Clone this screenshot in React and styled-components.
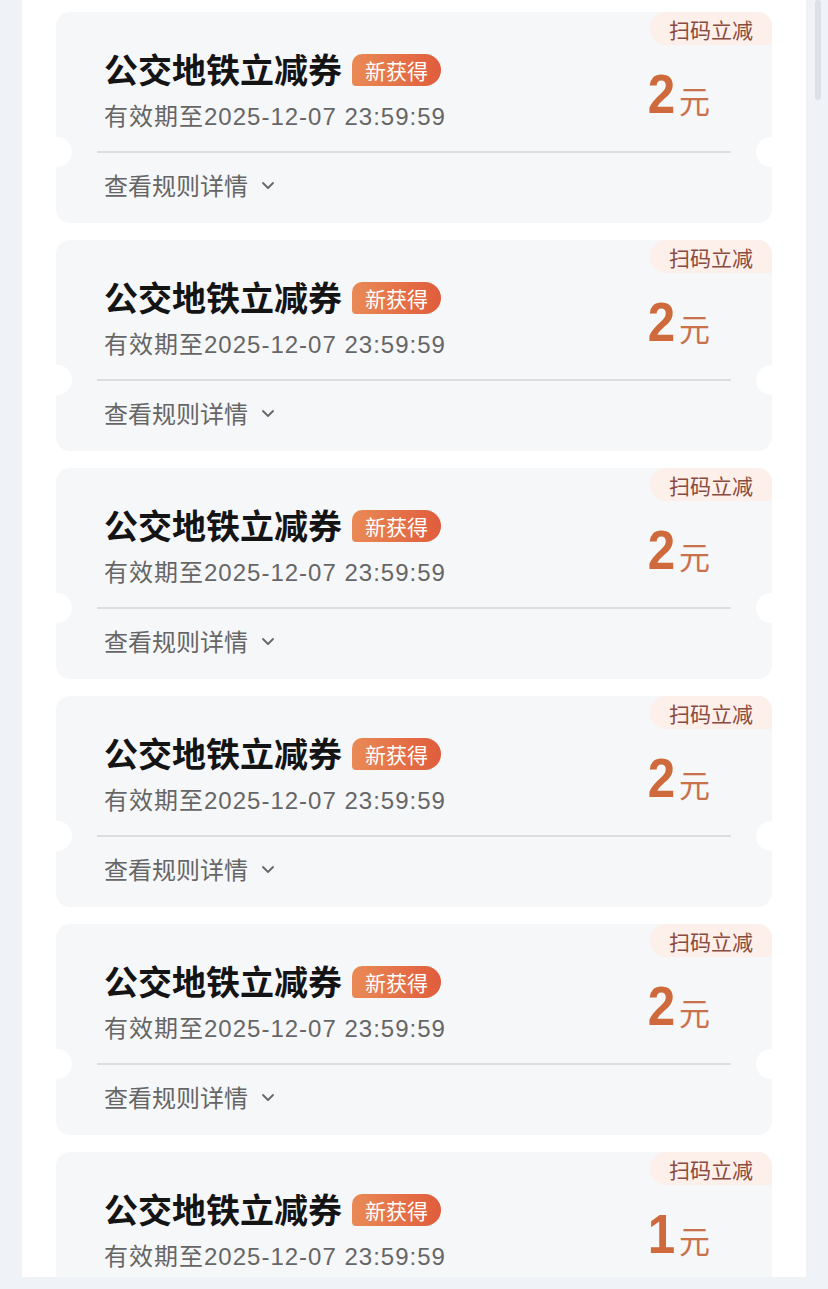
import React from "react";
import styled, { createGlobalStyle } from "styled-components";

const GlobalStyle = createGlobalStyle`
  html, body {
    margin: 0;
    padding: 0;
    background: #eff2f7;
  }
  body {
    font-family: "Liberation Sans", "Noto Sans CJK SC", sans-serif;
  }
`;

const Page = styled.div`
  display: flex;
  width: 828px;
  height: 1289px;
  background: #eff2f7;
  overflow: hidden;
`;

const Panel = styled.div`
  width: 784px;
  height: 1277px;
  margin-left: 22px;
  background: #ffffff;
  overflow: hidden;
  display: flex;
  flex-direction: column;
  gap: 17px;
  padding: 12px 34px 0;
  box-sizing: border-box;
`;

const Gutter = styled.div`
  flex: 1;
  display: flex;
  justify-content: center;
  padding-left: 2px;
`;

const Thumb = styled.div`
  width: 6px;
  height: 100px;
  border-radius: 3px;
  background: #dde1e7;
`;

const Card = styled.div`
  position: relative;
  flex-shrink: 0;
  height: 211px;
  background: #f6f7f9;
  border-radius: 14px;

  &::before,
  &::after {
    content: "";
    position: absolute;
    top: 125px;
    width: 30px;
    height: 30px;
    border-radius: 50%;
    background: #ffffff;
  }
  &::before {
    left: -14px;
  }
  &::after {
    right: -14px;
  }
`;

const Tag = styled.div`
  position: absolute;
  top: 0;
  right: 0;
  height: 33px;
  padding: 0 19px;
  display: flex;
  align-items: center;
  background: #fdefe9;
  color: #8a4a3e;
  font-family: "Noto Sans CJK SC", sans-serif;
  font-size: 21px;
  border-radius: 16px 14px 0 16px;
`;

const Upper = styled.div`
  display: flex;
  justify-content: space-between;
  align-items: center;
  padding: 35px 62px 0 48px;
`;

const Info = styled.div`
  display: flex;
  flex-direction: column;
  gap: 11px;
`;

const TitleRow = styled.div`
  display: flex;
  align-items: center;
  gap: 10px;
  height: 44px;
`;

const Title = styled.div`
  font-family: "Noto Sans CJK SC", sans-serif;
  font-weight: 700;
  font-size: 34px;
  line-height: 44px;
  color: #141414;
`;

const Badge = styled.div`
  height: 32px;
  margin-top: 2px;
  padding: 0 13px;
  display: flex;
  align-items: center;
  border-radius: 10px 16px 16px 4px;
  background: linear-gradient(90deg, #ea8a56 0%, #e05c3c 100%);
  color: #ffffff;
  font-family: "Noto Sans CJK SC", sans-serif;
  font-size: 21px;
`;

const Meta = styled.div`
  font-size: 24px;
  line-height: 30px;
  letter-spacing: 1px;
  color: #666666;
`;

const Price = styled.div`
  display: flex;
  align-items: baseline;
  margin-top: 8px;
  color: #cf6a3c;
`;

const Amount = styled.span`
  font-family: "Liberation Sans", Roboto, sans-serif;
  font-weight: 700;
  font-size: 56px;
  line-height: 1;
  display: inline-block;
  margin-right: 4px;
  transform: scaleX(0.88);
  transform-origin: right center;
`;

const Unit = styled.span`
  font-family: "Noto Sans CJK SC", sans-serif;
  font-size: 31px;
  color: #c9714a;
`;

const Divider = styled.div`
  height: 2px;
  margin: 19px 41px 0;
  background: #dcdde0;
`;

const Footer = styled.div`
  display: flex;
  align-items: center;
  gap: 12px;
  padding: 17px 48px 0;
  font-family: "Noto Sans CJK SC", sans-serif;
  font-size: 24px;
  line-height: 30px;
  color: #666666;
`;

const Chevron = () => (
  <svg width="16" height="16" viewBox="0 0 16 16" fill="none">
    <path d="M3 6l5 5 5-5" stroke="#666" strokeWidth="1.8" strokeLinecap="round" strokeLinejoin="round" />
  </svg>
);

const coupons = [2, 2, 2, 2, 2, 1];

function Coupon({ amount }) {
  return (
    <Card>
      <Tag>扫码立减</Tag>
      <Upper>
        <Info>
          <TitleRow>
            <Title>公交地铁立减券</Title>
            <Badge>新获得</Badge>
          </TitleRow>
          <Meta>有效期至2025-12-07 23:59:59</Meta>
        </Info>
        <Price>
          <Amount>{amount}</Amount>
          <Unit>元</Unit>
        </Price>
      </Upper>
      <Divider />
      <Footer>
        查看规则详情
        <Chevron />
      </Footer>
    </Card>
  );
}

export default function App() {
  return (
    <Page>
      <GlobalStyle />
      <Panel>
        {coupons.map((a, i) => (
          <Coupon key={i} amount={a} />
        ))}
      </Panel>
      <Gutter>
        <Thumb />
      </Gutter>
    </Page>
  );
}
